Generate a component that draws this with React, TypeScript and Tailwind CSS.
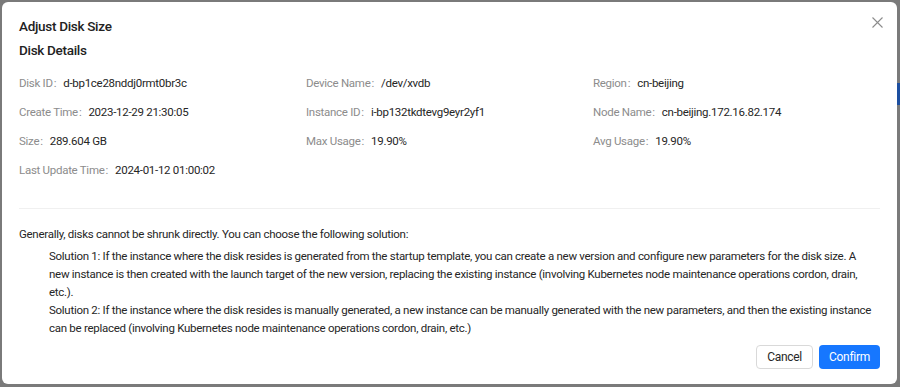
import React from 'react';

const details = [
  { label: 'Disk ID', value: 'd-bp1ce28nddj0rmt0br3c' },
  { label: 'Device Name', value: '/dev/xvdb' },
  { label: 'Region', value: 'cn-beijing' },
  { label: 'Create Time', value: '2023-12-29 21:30:05' },
  { label: 'Instance ID', value: 'i-bp132tkdtevg9eyr2yf1' },
  { label: 'Node Name', value: 'cn-beijing.172.16.82.174' },
  { label: 'Size', value: '289.604 GB' },
  { label: 'Max Usage', value: '19.90%' },
  { label: 'Avg Usage', value: '19.90%' },
  { label: 'Last Update Time', value: '2024-01-12 01:00:02' },
];

const App = () => {
  return (
    <div
      className="w-[900px] h-[387px] bg-[#7a7a7a] pt-[2px] pl-[2px] pr-[3px] relative overflow-hidden"
      style={{ fontFamily: 'Roboto, "Noto Sans", sans-serif' }}
    >
      {/* backdrop peek */}
      <div className="absolute right-0 top-[83px] w-[3px] h-[22px] bg-[#1d4fa0]"></div>

      {/* Modal */}
      <div className="relative h-[382px] bg-white rounded-[6px] px-[17px] pt-[14px] text-[11.5px] tracking-[-0.28px] text-[#333]">
        <button className="absolute right-[14px] top-[14px] w-[12px] h-[12px] flex items-center justify-center text-[#8c8c8c]">
          <svg width="11" height="11" viewBox="0 0 11 11" fill="none" stroke="currentColor" strokeWidth="1.1">
            <path d="M0.5 0.5 L10.5 10.5 M10.5 0.5 L0.5 10.5" />
          </svg>
        </button>

        <h2 className="text-[13.5px] leading-[20px] font-medium tracking-[-0.3px] text-[#222]">Adjust Disk Size</h2>
        <h3 className="mt-[4px] text-[13.5px] leading-[20px] font-medium tracking-[-0.3px] text-[#222]">Disk Details</h3>

        <div className="mt-[13px] grid grid-cols-3 gap-y-[9px]">
          {details.map((d) => (
            <div key={d.label} className="leading-[20px] flex items-center">
              <span className="text-[#8c8c8c]">{d.label}</span>
              <span className="text-[#8c8c8c] ml-[1px] mr-[7px]">:</span>
              <span className="text-[#262626]">{d.value}</span>
            </div>
          ))}
        </div>

        <div className="mt-[28px] h-px bg-[#f0f0f0]"></div>

        <p className="mt-[16px] leading-[18px] text-[#262626]">
          Generally, disks cannot be shrunk directly. You can choose the following solution:
        </p>
        <div className="mt-[4px] pl-[30px] leading-[18px] text-[#262626]">
          <p className="pr-[10px]">
            Solution 1: If the instance where the disk resides is generated from the startup template, you can create a new version and configure new parameters for the disk size. A new instance is then created with the launch target of the new version, replacing the existing instance (involving Kubernetes node maintenance operations cordon, drain, etc.).
          </p>
          <p>
            Solution 2: If the instance where the disk resides is manually generated, a new instance can be manually generated with the new parameters, and then the existing instance can be replaced (involving Kubernetes node maintenance operations cordon, drain, etc.)
          </p>
        </div>

        <div className="mt-[8px] flex justify-end gap-[6px]">
          <button className="h-[24px] px-[10px] rounded-[4px] border border-[#d9d9d9] bg-white text-[#262626] text-[12px]">
            Cancel
          </button>
          <button className="h-[24px] px-[10px] rounded-[4px] bg-[#1677ff] text-white text-[12px]">
            Confirm
          </button>
        </div>
      </div>
    </div>
  );
};

export default App;
